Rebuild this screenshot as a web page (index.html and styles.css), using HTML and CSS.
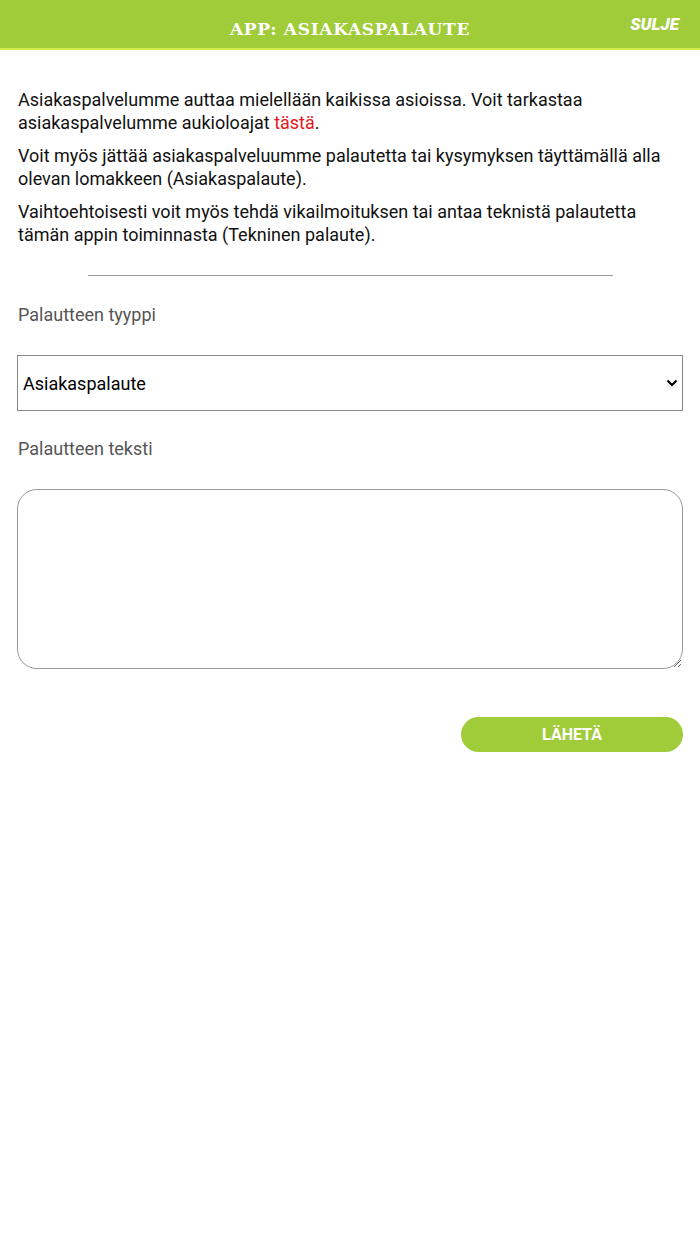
FILE: index.html
```html
<!DOCTYPE html>
<html lang="fi">
<head>
<meta charset="utf-8">
<title>App: Asiakaspalaute</title>
<link rel="stylesheet" href="styles.css">
</head>
<body>
<header class="topbar">
  <h1 class="title">APP: ASIAKASPALAUTE</h1>
  <a class="close" href="#">SULJE</a>
</header>
<main class="content">
  <p class="text">Asiakaspalvelumme auttaa mielellään kaikissa asioissa. Voit tarkastaa asiakaspalvelumme aukioloajat <a class="link" href="#">tästä</a>.</p>
  <p class="text">Voit myös jättää asiakaspalveluumme palautetta tai kysymyksen täyttämällä alla olevan lomakkeen (Asiakaspalaute).</p>
  <p class="text">Vaihtoehtoisesti voit myös tehdä vikailmoituksen tai antaa teknistä palautetta tämän appin toiminnasta (Tekninen palaute).</p>
  <hr class="divider">
  <form class="form">
    <label class="label" for="type">Palautteen tyyppi</label>
    <div class="select-wrap">
      <select id="type" class="select">
        <option>Asiakaspalaute</option>
        <option>Tekninen palaute</option>
      </select>
      <svg class="chevron" viewBox="0 0 12 8" width="12" height="8"><path d="M1.5 1.5 L6 6 L10.5 1.5" fill="none" stroke="#000" stroke-width="2.2"/></svg>
    </div>
    <label class="label" for="msg">Palautteen teksti</label>
    <textarea id="msg" class="textarea"></textarea>
    <div class="actions">
      <button type="button" class="send">LÄHETÄ</button>
    </div>
  </form>
</main>
</body>
</html>
```
FILE: styles.css
```css
html, body {
  margin: 0;
  padding: 0;
  background: #fff;
}
body {
  font-family: Roboto, "Liberation Sans", sans-serif;
  color: #111;
}
.topbar {
  height: 48px;
  background: #a0cc3a;
  border-bottom: 2px solid #d2ec4c;
  display: flex;
  align-items: center;
  justify-content: center;
  position: relative;
}
.title {
  margin: 9px 0 0 0;
  font-family: "DejaVu Serif", serif;
  font-weight: bold;
  font-size: 17px;
  letter-spacing: 0.7px;
  color: #fff;
}
.close {
  position: absolute;
  right: 21px;
  top: 14px;
  font-family: Roboto, sans-serif;
  font-weight: 900;
  font-style: italic;
  font-size: 17px;
  color: #fff;
  text-decoration: none;
}
.content {
  padding: 38px 17px 0 18px;
}
.text {
  margin: 0 0 10px 0;
  font-size: 18px;
  line-height: 23px;
}
.link {
  color: #e8161c;
  text-decoration: none;
}
.divider {
  width: 525px;
  margin: 29px auto 0 auto;
  border: 0;
  border-top: 1px solid #999;
}
.form {
  display: flex;
  flex-direction: column;
}
.label {
  margin-top: 27px;
  font-size: 18px;
  line-height: 24px;
  color: #555;
}
.select-wrap {
  position: relative;
  margin: 28px 0 0 -1px;
}
.select {
  width: 100%;
  height: 56px;
  box-sizing: border-box;
  appearance: none;
  -webkit-appearance: none;
  background: #fff;
  border: 1px solid #888;
  border-radius: 0;
  padding: 0 0 0 5px;
  font-family: Roboto, sans-serif;
  font-size: 18px;
  color: #000;
}
.chevron {
  position: absolute;
  right: 5px;
  top: 24px;
}
.select-wrap + .label {
  margin-top: 26px;
}
.textarea {
  margin: 28px 0 0 -1px;
  height: 180px;
  box-sizing: border-box;
  border: 1px solid #999;
  border-radius: 20px;
  resize: vertical;
  font-family: Roboto, sans-serif;
  font-size: 18px;
}
.actions {
  display: flex;
  justify-content: flex-end;
  margin-top: 48px;
}
.send {
  width: 222px;
  height: 35px;
  border: 0;
  border-radius: 18px;
  background: #a0cc3a;
  color: #fff;
  font-family: Roboto, sans-serif;
  font-weight: bold;
  font-size: 16px;
}
```
